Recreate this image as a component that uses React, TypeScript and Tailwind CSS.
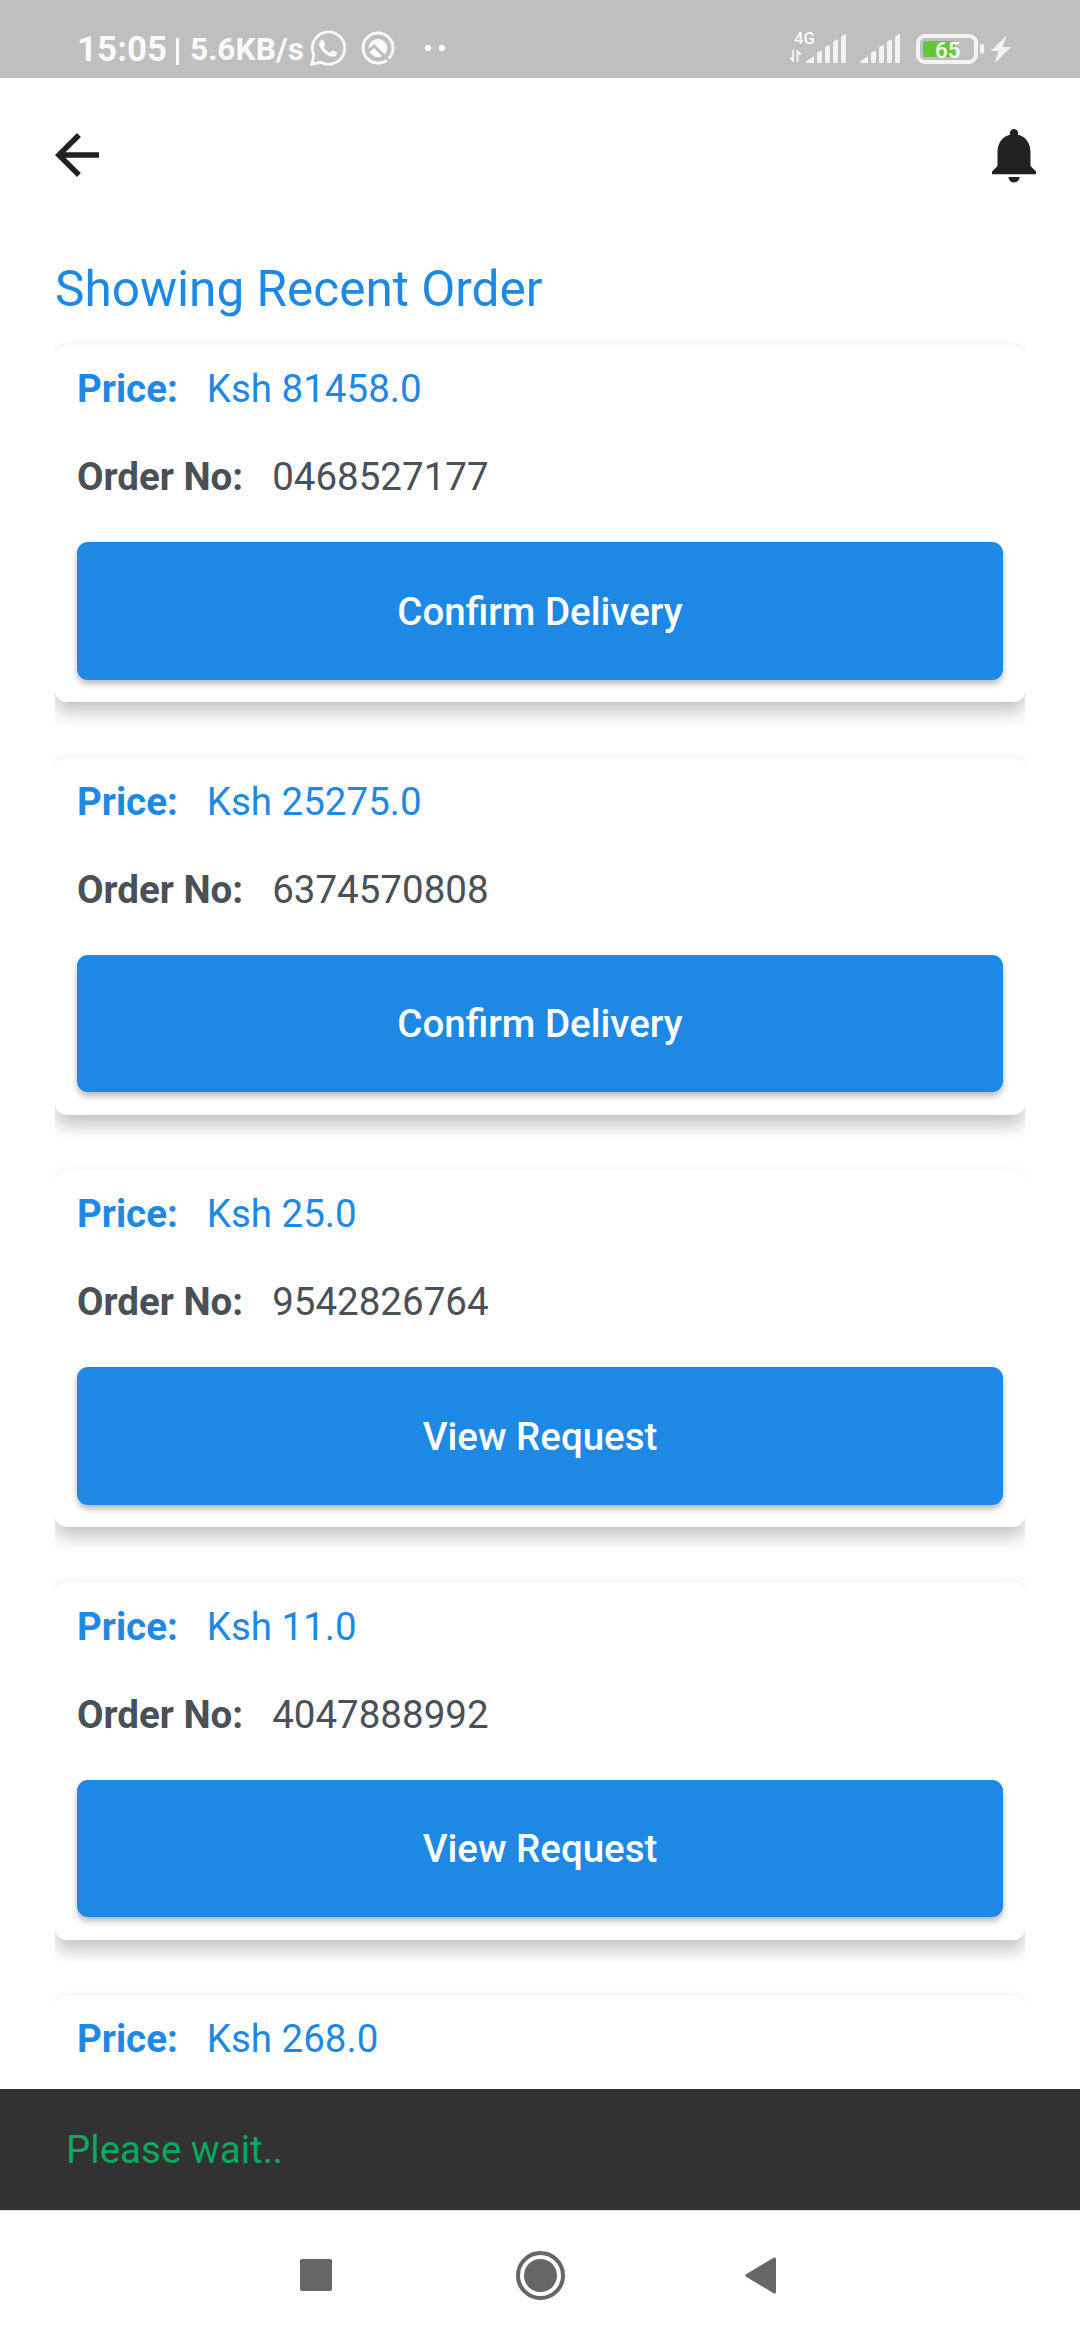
import React from 'react';

type Order = { price: string; number?: string; action?: string };

const orders: Order[] = [
  { price: 'Ksh 81458.0', number: '0468527177', action: 'Confirm Delivery' },
  { price: 'Ksh 25275.0', number: '6374570808', action: 'Confirm Delivery' },
  { price: 'Ksh 25.0', number: '9542826764', action: 'View Request' },
  { price: 'Ksh 11.0', number: '4047888992', action: 'View Request' },
  { price: 'Ksh 268.0' },
];

function WhatsAppIcon() {
  return (
    <svg className="ml-[7px] h-9 w-9" viewBox="0 0 36 36" fill="none">
      <path d="M1.8 34.2 L3.9 25.2 A16.2 16.2 0 1 1 10.6 32.3 Z" stroke="#fafafa" strokeWidth="2.8" strokeLinejoin="miter" />
      <path
        d="M11.4 9.9h1.3c.6 0 .9.3 1.1.8l1.5 3.6c.2.5.1.9-.2 1.3l-1.3 1.7c1.4 2.5 3.4 4.3 6.1 5.4l1.7-2c.4-.5.8-.6 1.3-.3l3.4 1.7c.6.3.8.6.7 1.2-.3 2.3-2.2 3.5-4.3 3.5-2.7 0-6.7-2-9.8-5.4-2.3-2.5-3.8-5.2-3.8-7.5 0-1.7.9-3.4 2.3-4z"
        fill="#fafafa"
      />
    </svg>
  );
}

function AssistIcon() {
  return (
    <svg className="ml-[15px] h-[34px] w-[34px]" viewBox="0 0 34 34" fill="none">
      <circle cx="17" cy="17" r="15" stroke="#fafafa" strokeWidth="3" />
      <circle cx="17" cy="17" r="9.3" fill="#fafafa" />
      <path d="M6 21.5 L13 15 L29 30.5" stroke="#bfbfbf" strokeWidth="3" />
    </svg>
  );
}

function SignalBars() {
  return (
    <svg className="h-[30px] w-10" viewBox="0 0 40 30" fill="#f3f3f3">
      <path d="M0 27.5 L8 22 V29 H1 Q0 29 0 27.5Z" />
      <path d="M11 19 Q11.5 17.8 16 16.8 V28 Q16 29 15 29 H12 Q11 29 11 28Z" />
      <path d="M19 13.5 Q19.5 12 24 11 V28 Q24 29 23 29 H20 Q19 29 19 28Z" />
      <path d="M27 8.5 Q27.5 6.5 32 5.5 V28 Q32 29 31 29 H28 Q27 29 27 28Z" />
      <path d="M35 3.5 Q35.5 1 40 0 V28 Q40 29 39 29 H36 Q35 29 35 28Z" />
    </svg>
  );
}

function StatusBar() {
  return (
    <div className="flex h-[78px] shrink-0 items-start bg-[#bfbfbf] pl-[77px] pr-[69px] text-[#fafafa]">
      <div className="mt-[30px] flex h-9 items-center whitespace-nowrap font-bold">
        <span className="mt-[3px] w-[90px] text-[35px] leading-[36px]">15:05</span>
        <span className="ml-[9px] mt-[7px] h-[27px] w-[3px] bg-[#fafafa]" />
        <span className="ml-[11px] mt-[4px] w-[113px] text-[31.7px] leading-[36px]">5.6KB/s</span>
        <WhatsAppIcon />
        <AssistIcon />
        <span className="ml-[30px] h-[6px] w-[6px] rounded-[2px] bg-[#fafafa]" />
        <span className="ml-2 h-[6px] w-[6px] rounded-[2px] bg-[#fafafa]" />
      </div>
      <div className="ml-auto mt-[30px] flex h-9 items-start">
        <div className="flex w-[25px] flex-col">
          <span className="ml-[5px] h-[20px] text-[16.5px] font-medium leading-[17px]">4G</span>
          <svg className="h-[13px] w-[13px]" viewBox="0 0 13 13" fill="#f3f3f3">
            <path d="M3.2 0H5V12H4L0 7.5H3.2Z M7.5 0H8.5L13 4.5H9.5V12H7.5Z" />
          </svg>
        </div>
        <div className="-ml-[8px] mt-1"><SignalBars /></div>
        <div className="ml-[14px] mt-1"><SignalBars /></div>
        <div className="relative ml-4 mt-1 flex h-[30px] w-[62px] items-center rounded-[9px] border-4 border-[#f3f3f3]">
          <span className="ml-[3px] h-4 w-[32px] rounded-[3px] bg-[#68c636]" />
          <span className="absolute left-[15px] top-0 text-[22.5px] font-medium leading-[24px]">65</span>
        </div>
        <span className="ml-[2px] mt-[14px] h-[10px] w-1 rounded-[2px] bg-[#f3f3f3]" />
        <svg className="ml-[7px] mt-1 h-[30px] w-5" viewBox="0 0 20 30" fill="#f3f3f3">
          <path d="M16 1 L0 17 H7.5 L3.5 29.5 L20 13 H11.5Z" />
        </svg>
      </div>
    </div>
  );
}

function AppBar() {
  return (
    <header className="flex h-[154px] shrink-0 items-center justify-between pl-[44px] pr-[33px] text-[#212121]">
      <svg className="h-[66px] w-[66px]" viewBox="0 0 24 24" fill="currentColor">
        <path d="M20 11H7.83l5.59-5.59L12 4l-8 8 8 8 1.41-1.41L7.83 13H20v-2z" />
      </svg>
      <svg className="h-[66px] w-[66px]" viewBox="0 0 24 24" fill="currentColor">
        <path d="M12 22c1.1 0 2-.9 2-2h-4c0 1.1.89 2 2 2zm6-6v-5c0-3.07-1.64-5.64-4.5-6.32V4c0-.83-.67-1.5-1.5-1.5s-1.5.67-1.5 1.5v.68C7.63 5.36 6 7.92 6 11v5l-2 2v1h16v-1l-2-2z" />
      </svg>
    </header>
  );
}

function OrderCard({ order }: { order: Order }) {
  return (
    <article className="h-[357.5px] shrink-0 rounded-[11px] bg-white px-[22px] pt-[21.5px] shadow-[0_10px_18px_0_rgba(0,0,0,0.24),0_0_3px_0_rgba(0,0,0,0.04)]">
      <div className="flex h-[46px] items-center gap-[29px] text-[#1e88e5]">
        <span className="font-bold">Price:</span>
        <span>{order.price}</span>
      </div>
      {order.number && (
        <div className="mt-[42px] flex h-[46px] items-center gap-[29px] text-[#495057]">
          <span className="font-bold">Order No:</span>
          <span>{order.number}</span>
        </div>
      )}
      {order.action && (
        <button className="mt-[42px] flex h-[137.5px] w-full items-center justify-center rounded-[11px] bg-[#1e88e5] pt-[2px] font-medium text-white shadow-[0_4px_6px_0_rgba(0,0,0,0.28)]">
          {order.action}
        </button>
      )}
    </article>
  );
}

function NavigationBar() {
  return (
    <nav className="flex h-[130px] shrink-0 items-start border-t border-[#dedede] bg-white pl-[300px]">
      <span className="mt-[48px] h-8 w-8 rounded-[2px] bg-[#666]" />
      <span className="ml-[184px] mt-[40px] flex h-[49px] w-[49px] items-center justify-center rounded-full border-4 border-[#666]">
        <span className="h-[33px] w-[33px] rounded-full bg-[#666]" />
      </span>
      <svg className="ml-[180px] mt-[46px] h-[37px] w-[31px]" viewBox="0 0 31 37" fill="#666" stroke="#666" strokeWidth="3" strokeLinejoin="round">
        <path d="M1.8 18.5 L29.5 2 V35Z" />
      </svg>
    </nav>
  );
}

export default function App() {
  return (
    <div className="flex h-[2340px] w-[1080px] flex-col overflow-hidden bg-white font-['Roboto',sans-serif] text-[38.5px] leading-[46px]">
      <StatusBar />
      <AppBar />
      <main className="flex min-h-0 flex-1 flex-col overflow-hidden px-[55px]">
        <h1 className="mt-[27px] h-[60px] shrink-0 text-[49.5px] leading-[60px] text-[#1e88e5]">Showing Recent Order</h1>
        <section className="flex min-h-0 flex-1 flex-col gap-[55px] overflow-hidden pt-[25.5px]">
          {orders.map((order) => (
            <OrderCard key={order.price} order={order} />
          ))}
        </section>
      </main>
      <div className="flex h-[121px] shrink-0 items-center bg-[#323232] pl-[66px] text-[#0aa75f]">Please wait..</div>
      <NavigationBar />
    </div>
  );
}
